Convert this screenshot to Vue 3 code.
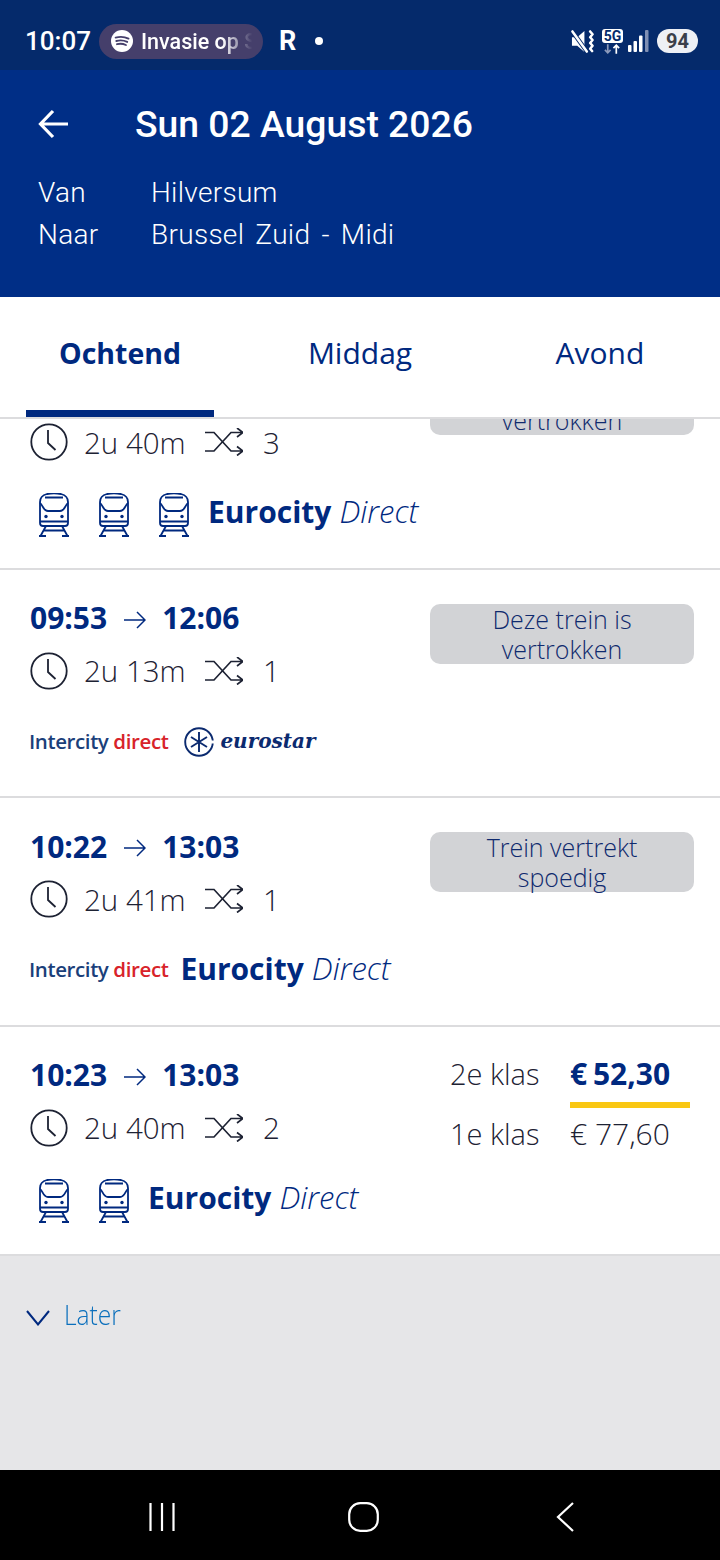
<template>
  <div class="phone">
    <div class="status-bar">
      <span class="clock">10:07</span>
      <div class="media-chip">
        <svg class="spotify" viewBox="0 0 22 22">
          <circle cx="11" cy="11" r="11" fill="#fff" />
          <path d="M4.6 7.600c4.400-1.200 9-.9 12.900 1M5.300 11c3.700-1 7.600-.7 10.900.9M6 14.200c3-.8 6.200-.5 8.900.8" fill="none" stroke="#453f6b" stroke-width="1.900" stroke-linecap="round" />
        </svg>
        <span class="media-text">Invasie op S</span>
      </div>
      <span class="revolut">R</span>
      <span class="dot"></span>
      <div class="status-right">
        <svg class="mute" viewBox="0 0 24 24">
          <path d="M1 7.500h5.500L14 1v22l-7.500-6.500H1z" fill="#fff" />
          <path d="M1.500 1.500l15 21" stroke="#052a6b" stroke-width="4.500" />
          <path d="M1.500 1.500l15 21" stroke="#fff" stroke-width="2.600" stroke-linecap="round" />
          <path d="M20 1.500l2.500 3-2.500 3 2.500 3-2.500 3 2.500 3-2.500 3 2 2.500" fill="none" stroke="#fff" stroke-width="2.600" stroke-linecap="round" stroke-linejoin="round" />
        </svg>
        <div class="net">
          <span class="net-label">5G</span>
          <svg class="net-arrows" viewBox="0 0 20 10">
            <path d="M5 0v9M2 6l3 3 3-3" fill="none" stroke="#8c9abb" stroke-width="1.800" />
            <path d="M14 10V1M11 4l3-3 3 3" fill="none" stroke="#fff" stroke-width="1.800" />
          </svg>
        </div>
        <svg class="signal" viewBox="0 0 22 22">
          <rect x="1" y="15" width="3.500" height="7" rx="1" fill="#fff" />
          <rect x="6.500" y="11" width="3.500" height="11" rx="1" fill="#fff" />
          <rect x="12" y="5.500" width="3.500" height="16.500" rx="1" fill="#fff" />
          <rect x="18" y="0" width="3.500" height="22" rx="1" fill="#7f8fb3" />
        </svg>
        <div class="battery">94</div>
      </div>
    </div>

    <header class="top-bar">
      <div class="title-row">
        <svg class="back" viewBox="0 0 30 30">
          <path d="M30 15H3M15 2L2.500 15 15 28" fill="none" stroke="#fff" stroke-width="3.200" />
        </svg>
        <h1>Sun 02 August 2026</h1>
      </div>
      <div class="route"><span>Van</span><span>Hilversum</span></div>
      <div class="route"><span>Naar</span><span>Brussel Zuid - Midi</span></div>
    </header>

    <nav class="tabs">
      <div v-for="tab in tabs" :key="tab" class="tab" :class="{ active: tab === 'Ochtend' }">{{ tab }}</div>
    </nav>

    <div class="list">
      <div v-for="(trip, i) in trips" :key="i" class="card">
        <div class="left">
          <div class="times">
            <span>{{ trip.from }}</span>
            <svg class="arrow" viewBox="0 0 22 18">
              <path d="M0 9h21M13 1l8 8-8 8" fill="none" stroke="#00297f" stroke-width="1.500" />
            </svg>
            <span>{{ trip.to }}</span>
          </div>
          <div class="duration">
            <svg class="clock-icon" viewBox="0 0 38 38">
              <circle cx="19" cy="19" r="17.700" fill="none" stroke="#1d2233" stroke-width="1.800" />
              <path d="M18 7v13l7.500 7" fill="none" stroke="#1d2233" stroke-width="1.800" />
            </svg>
            <span class="dur-text">{{ trip.duration }}</span>
            <svg class="shuffle" viewBox="0 0 38 28">
              <path d="M0 4.500h9L26 23h12M0 23h9L26 4.500h12M32 0l6 4.500-6 4.500M32 18.500l6 4.500-6 4.500" fill="none" stroke="#1d2233" stroke-width="1.700" />
            </svg>
            <span class="changes">{{ trip.changes }}</span>
          </div>
          <div class="operator">
            <span v-if="trip.intercity" class="intercity">Intercity <b>direct</b></span>
            <div v-if="trip.trains" class="trains">
              <svg v-for="n in trip.trains" :key="n" class="train" viewBox="0 0 30 44">
                <path d="M1 9c0-4 3-7 7-8 4-.8 10-.8 14 0 4 1 7 4 7 8v21c0 2-1 3-3 3H4c-2 0-3-1-3-3z" fill="none" stroke="#00297f" stroke-width="1.800" />
                <path d="M6 4.500h18M1 10c2.500 1 3 8 8 8h12c5 0 5.500-7 8-8M1 28.500h28M7 33L1.500 43M23 33l5.500 10M0 43h7M23 43h7M5 37.500h20" fill="none" stroke="#00297f" stroke-width="1.800" />
                <circle cx="7" cy="23.500" r="1.700" fill="#00297f" />
                <circle cx="23" cy="23.500" r="1.700" fill="#00297f" />
              </svg>
            </div>
            <span v-if="trip.eurocity" class="eurocity" :class="{ 'after-logo': trip.intercity }"><b>Eurocity</b> <i>Direct</i></span>
            <div v-if="trip.eurostar" class="eurostar">
              <svg class="star-logo" viewBox="0 0 30 30">
                <circle cx="15" cy="15" r="13.800" fill="none" stroke="#0b2a6f" stroke-width="1.900" />
                <path d="M15 5v20M7 10l16 10M7 20l16-10" stroke="#0b2a6f" stroke-width="1.900" />
                <path d="M24 15h6" stroke="#fff" stroke-width="3" />
              </svg>
              <span>eurostar</span>
            </div>
          </div>
        </div>
        <div v-if="trip.note" class="right">
          <div class="note">{{ trip.note }}</div>
        </div>
        <div v-if="trip.prices" class="right prices">
          <div class="price-row">
            <span class="klas">2e klas</span>
            <span class="price best">€ 52,30</span>
          </div>
          <div class="price-row">
            <span class="klas">1e klas</span>
            <span class="price">€ 77,60</span>
          </div>
        </div>
      </div>
      <div class="later">
        <svg class="chevron" viewBox="0 0 24 16">
          <path d="M1 1l11 13.500L23 1" fill="none" stroke="#00297f" stroke-width="2" />
        </svg>
        <span class="later-text">Later</span>
      </div>
    </div>

    <div class="nav-bar">
      <svg class="nav-bars" viewBox="0 0 26 30">
        <path d="M1.500 1v28M13 1v28M24.500 1v28" stroke="#fff" stroke-width="2.200" />
      </svg>
      <svg class="nav-home" viewBox="0 0 31 30">
        <rect x="1.200" y="1.200" width="28.600" height="27.600" rx="11" fill="none" stroke="#fff" stroke-width="2.200" />
      </svg>
      <svg class="nav-back" viewBox="0 0 18 30">
        <path d="M17 1L2 15l15 14" fill="none" stroke="#fff" stroke-width="2.200" />
      </svg>
    </div>
  </div>
</template>

<script setup>
const tabs = ['Ochtend', 'Middag', 'Avond']

const trips = [
  { from: '09:23', to: '12:03', duration: '2u 40m', changes: 3, trains: 3, eurocity: true, note: 'Deze trein is vertrokken' },
  { from: '09:53', to: '12:06', duration: '2u 13m', changes: 1, intercity: true, eurostar: true, note: 'Deze trein is vertrokken' },
  { from: '10:22', to: '13:03', duration: '2u 41m', changes: 1, intercity: true, eurocity: true, note: 'Trein vertrekt spoedig' },
  { from: '10:23', to: '13:03', duration: '2u 40m', changes: 2, trains: 2, eurocity: true, prices: true },
]
</script>

<style>
html,
body {
  margin: 0;
  background: #000;
}
</style>

<style scoped>
.phone {
  width: 720px;
  height: 1560px;
  display: flex;
  flex-direction: column;
  overflow: hidden;
  background: #fff;
  font-family: "Open Sans", sans-serif;
}

.status-bar {
  height: 70px;
  flex: none;
  box-sizing: border-box;
  padding: 12px 22px 0 25px;
  display: flex;
  align-items: center;
  background: #052a6b;
  color: #fff;
  font-family: Roboto, sans-serif;
}

.clock {
  font-size: 26px;
  font-weight: 500;
  width: 74px;
}

.media-chip {
  width: 164px;
  height: 35px;
  box-sizing: border-box;
  padding-left: 12px;
  display: flex;
  align-items: center;
  border-radius: 18px;
  background: #453f6b;
}

.spotify {
  width: 22px;
  height: 22px;
  flex: none;
}

.media-text {
  width: 116px;
  margin-left: 8px;
  white-space: nowrap;
  font-size: 21.500px;
  font-weight: 500;
  -webkit-mask-image: linear-gradient(to right, #000 70%, transparent 96%);
  mask-image: linear-gradient(to right, #000 70%, transparent 96%);
}

.revolut {
  width: 17px;
  margin-left: 16px;
  font-size: 27px;
  font-weight: 700;
}

.dot {
  width: 8px;
  height: 8px;
  margin-left: 19px;
  border-radius: 50%;
  background: #fff;
}

.status-right {
  margin-left: auto;
  display: flex;
  align-items: center;
}

.mute {
  width: 23px;
  height: 23px;
}

.net {
  width: 21px;
  margin-left: 8px;
  display: flex;
  flex-direction: column;
  align-items: center;
}

.net-label {
  width: 21px;
  height: 14px;
  border-radius: 3px;
  background: #fff;
  color: #052a6b;
  font-size: 14px;
  font-weight: 700;
  line-height: 14px;
  text-align: center;
}

.net-arrows {
  width: 19px;
  height: 10px;
  margin-top: 1px;
}

.signal {
  width: 22px;
  height: 22px;
  margin-left: 4px;
}

.battery {
  width: 41px;
  height: 24px;
  margin-left: 8px;
  border-radius: 12px;
  background: #eef0f5;
  color: #3b3f4a;
  font-size: 20px;
  font-weight: 700;
  line-height: 24px;
  text-align: center;
}

.top-bar {
  height: 227px;
  flex: none;
  box-sizing: border-box;
  padding: 31px 0 0 38px;
  background: #002e86;
  color: #fff;
  font-family: Roboto, sans-serif;
}

.title-row {
  height: 46px;
  margin-bottom: 24px;
  display: flex;
  align-items: center;
}

.back {
  width: 30px;
  height: 30px;
  flex: none;
}

h1 {
  margin: 0 0 0 67px;
  font-size: 37.300px;
  font-weight: 500;
}

.route {
  height: 42px;
  display: flex;
  align-items: center;
  font-size: 28px;
  font-weight: 300;
  letter-spacing: 0.3px;
  word-spacing: 4px;
}

.route span:first-child {
  width: 113px;
}

.tabs {
  height: 122px;
  flex: none;
  box-sizing: border-box;
  display: grid;
  grid-template-columns: repeat(3, 1fr);
  border-bottom: 2px solid #dcdcde;
}

.tab {
  position: relative;
  padding-top: 36px;
  color: #00297f;
  font-size: 30px;
  line-height: 40px;
  text-align: center;
}

.tab.active {
  font-size: 28.500px;
  font-weight: 700;
}

.tab.active::after {
  content: "";
  position: absolute;
  left: 26px;
  right: 26px;
  bottom: 0;
  height: 7px;
  background: #00297f;
}

.list {
  flex: 1;
  display: flex;
  flex-direction: column;
  overflow: hidden;
}

.card {
  height: 228.670px;
  flex: none;
  box-sizing: border-box;
  padding-top: 30px;
  display: flex;
  justify-content: space-between;
  border-bottom: 2px solid #dcdcde;
  background: #fff;
}

.card:first-child {
  margin-top: -78px;
}

.left {
  padding-left: 30px;
}

.times {
  height: 36px;
  display: flex;
  align-items: center;
  color: #00297f;
  font-size: 30px;
  font-weight: 700;
}

.arrow {
  width: 22px;
  height: 18px;
  margin: 4px 16px 0 17px;
}

.duration {
  height: 40px;
  margin-top: 15px;
  display: flex;
  align-items: center;
  color: #1d2233;
  font-size: 29.500px;
  font-weight: 300;
}

.clock-icon {
  width: 38px;
  height: 38px;
}

.dur-text {
  width: 121px;
  margin-left: 16px;
}

.shuffle {
  width: 38px;
  height: 28px;
}

.changes {
  margin-left: 20px;
}

.operator {
  height: 44px;
  margin-top: 28px;
  display: flex;
  align-items: center;
  color: #00297f;
}

.intercity {
  margin-left: -1px;
  color: #1b3f7a;
  font-size: 20.500px;
  font-weight: 600;
  letter-spacing: -0.4px;
  white-space: nowrap;
}

.intercity b {
  color: #d8232a;
  font-weight: 600;
}

.trains {
  padding-left: 9px;
  display: flex;
  gap: 30px;
}

.train {
  width: 30px;
  height: 44px;
  margin-top: 6px;
}

.eurocity {
  margin: -2px 0 0 19px;
  font-size: 31px;
  white-space: nowrap;
}

.eurocity.after-logo {
  margin-left: 12px;
}

.eurocity b {
  font-size: 30px;
  font-weight: 700;
}

.eurocity i {
  font-weight: 300;
}

.eurostar {
  margin: 3px 0 0 16px;
  display: flex;
  align-items: center;
  gap: 6px;
  color: #0b2a6f;
}

.star-logo {
  width: 30px;
  height: 30px;
}

.eurostar span {
  margin-top: -2px;
  font-family: "DejaVu Serif", serif;
  font-size: 20px;
  font-style: italic;
  font-weight: 700;
}

.right {
  width: 264px;
  margin-right: 26px;
}

.note {
  box-sizing: border-box;
  height: 60px;
  margin-top: 4px;
  padding: 0 40px;
  border-radius: 10px;
  background: #d2d3d6;
  color: #0f2a6e;
  font-size: 25px;
  font-weight: 300;
  line-height: 30px;
  text-align: center;
}

.prices {
  width: 240px;
  margin-right: 30px;
  margin-top: -2px;
}

.price-row {
  height: 60px;
  display: flex;
  align-items: flex-start;
  color: #1d2233;
  font-size: 29px;
  font-weight: 300;
  line-height: 38px;
}

.klas {
  width: 120px;
  padding-right: 31px;
  box-sizing: border-box;
  text-align: right;
  white-space: nowrap;
}

.price {
  flex: 1;
  font-size: 30px;
  word-spacing: 0;
  white-space: nowrap;
}

.price.best {
  flex: none;
  width: 120px;
  height: 47px;
  margin-bottom: -2px;
  border-bottom: 6px solid #f9c713;
  color: #00297f;
  font-weight: 700;
  word-spacing: -2px;
}

.later {
  flex: 1;
  padding: 40px 0 0 26px;
  display: flex;
  align-items: flex-start;
  gap: 14px;
  background: #e6e6e8;
  color: #0a6fbc;
  font-size: 27px;
  font-weight: 300;
  line-height: 38px;
}

.later-text {
  transform: scaleX(0.91);
  transform-origin: left center;
}

.chevron {
  width: 24px;
  height: 16px;
  margin-top: 14px;
}

.nav-bar {
  height: 90px;
  flex: none;
  box-sizing: border-box;
  padding: 3px 0 0 149px;
  display: flex;
  align-items: center;
  background: #000;
}

.nav-bars {
  width: 26px;
  height: 30px;
}

.nav-home {
  width: 31px;
  height: 30px;
  margin-left: 173px;
}

.nav-back {
  width: 18px;
  height: 30px;
  margin-left: 177px;
}
</style>
